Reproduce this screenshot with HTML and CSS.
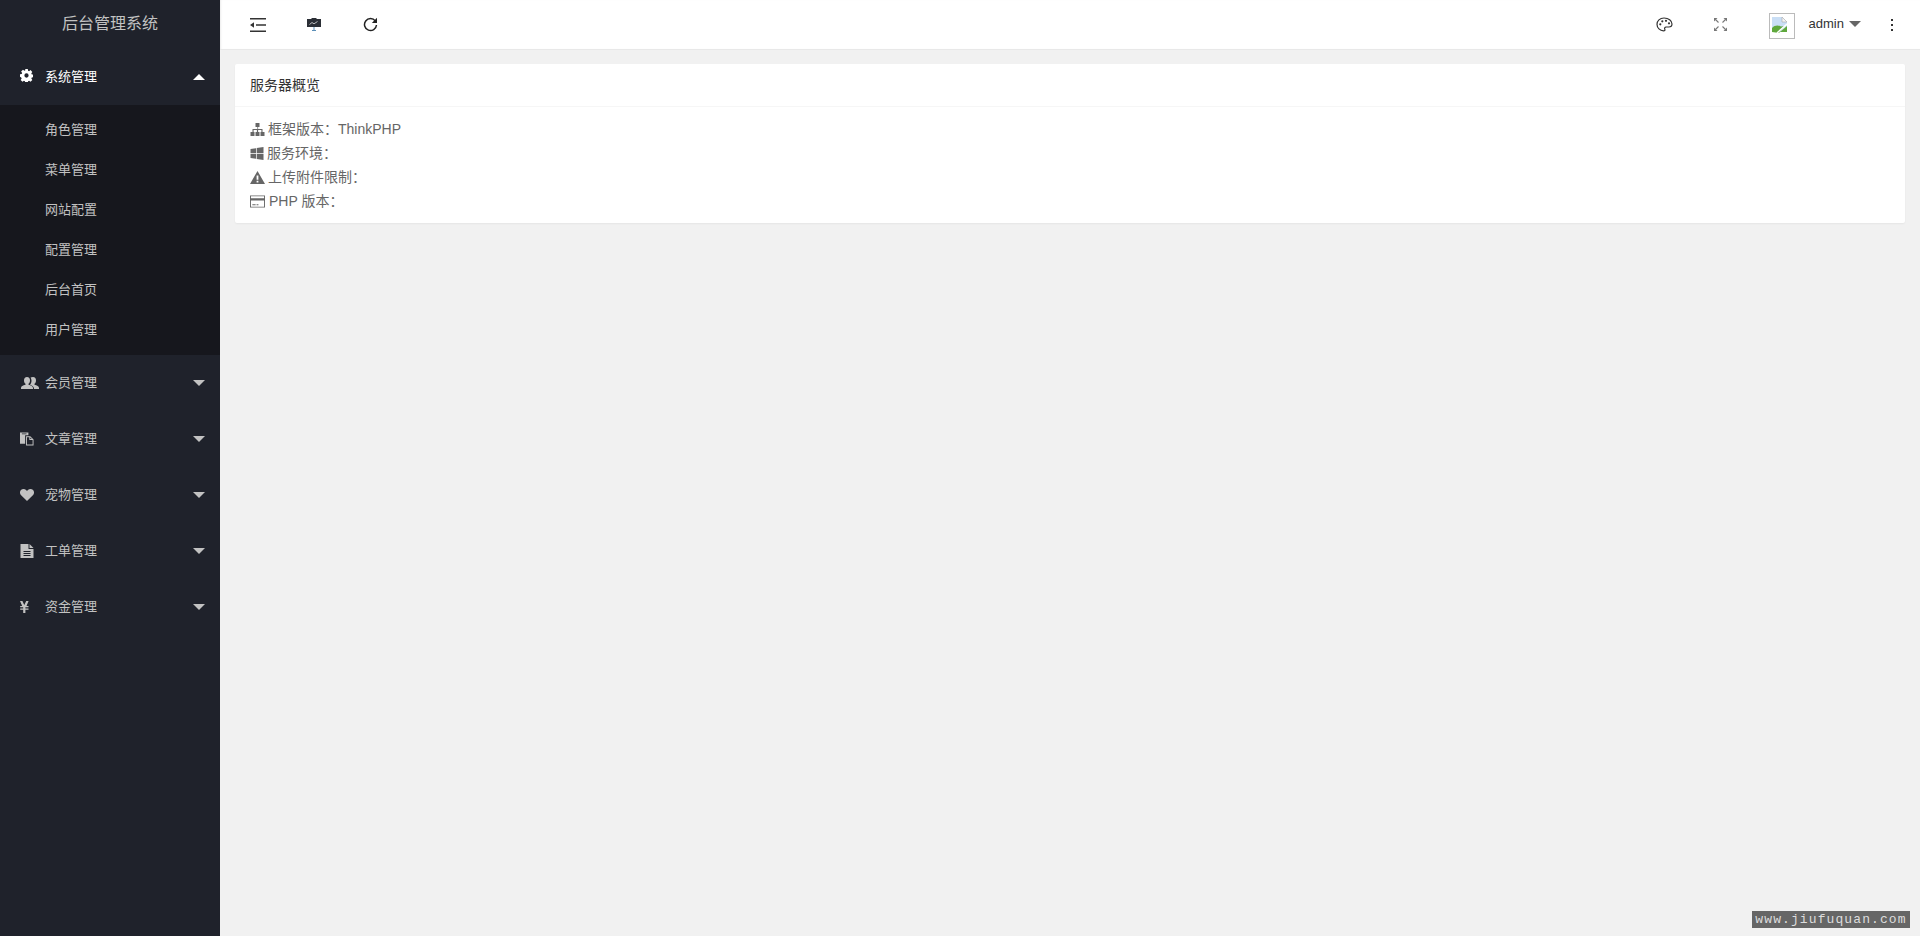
FILE: index.html
```html
<!DOCTYPE html>
<html lang="zh-CN">
<head>
    <meta charset="UTF-8">
    <title>后台管理系统</title>
    <link rel="stylesheet" href="styles.css">
</head>
<body>
    <div class="layout">
        <aside class="side">
            <div class="logo">后台管理系统</div>
            <ul class="nav">
                <li class="nav-item open">
                    <a class="nav-link">
                        <svg class="nav-icon gear" viewBox="0 0 14 14"><path fill-rule="evenodd" d="M5.6 0h2.8l.3 1.8 1.1.5L11.300 1.200l2 2-1.100 1.500.5 1.100 1.800.3v2.800l-1.800.3-.5 1.100 1.100 1.500-2 2-1.500-1.100-1.100.5-.3 1.800H5.600l-.3-1.800-1.100-.5-1.500 1.100-2-2 1.100-1.500-.5-1.100L0 8.400V5.600l1.800-.3.5-1.100-1.100-1.500 2-2 1.500 1.100 1.100-.5zM7 4.700a2.300 2.300 0 1 0 0 4.600 2.300 2.300 0 0 0 0-4.600z"/></svg>
                        <span>系统管理</span>
                        <i class="caret up"></i>
                    </a>
                    <ul class="sub">
                        <li>角色管理</li>
                        <li>菜单管理</li>
                        <li>网站配置</li>
                        <li>配置管理</li>
                        <li>后台首页</li>
                        <li>用户管理</li>
                    </ul>
                </li>
                <li class="nav-item">
                    <a class="nav-link">
                        <svg class="nav-icon wide" viewBox="0 0 18 14"><path d="M6 1c2 0 3 1.500 3 3.500 0 1.500-.6 2.700-1.500 3.300v1c2.500.7 4.500 1.500 4.500 3.200v1H0v-1c0-1.700 1.900-2.500 4.500-3.200v-1C3.600 7.200 3 6 3 4.500 3 2.500 4 1 6 1z"/><path d="M12 1c2 0 3 1.500 3 3.500 0 1.500-.6 2.700-1.500 3.300v1c2.500.7 4.500 1.500 4.500 3.200v1h-5c0-2.300-1.700-3.400-4-4.200.8-1 1.500-2.300 1.500-4 0-1.300-.3-2.400-.9-3.200C10.200 1.300 11 1 12 1z"/></svg>
                        <span>会员管理</span>
                        <i class="caret"></i>
                    </a>
                </li>
                <li class="nav-item">
                    <a class="nav-link">
                        <svg class="nav-icon" viewBox="0 0 15 14"><path d="M0 0h9v3H5.500v9H0zM2 1v1h5V1z" fill-rule="evenodd"/><path fill-rule="evenodd" d="M6.500 4H11l3.500 3.500V14h-8zM7.500 5v8h6V8H10V5zM11 5.400V7h1.600z"/></svg>
                        <span>文章管理</span>
                        <i class="caret"></i>
                    </a>
                </li>
                <li class="nav-item">
                    <a class="nav-link">
                        <svg class="nav-icon" viewBox="0 0 15 13"><path d="M7.500 13 1.200 6.800C-.4 5.100-.4 2.600 1 1.200 2.500-.3 5-.3 6.500 1.100l1 1 1-1C10-.3 12.500-.3 14 1.200c1.400 1.400 1.400 3.900-.2 5.600z"/></svg>
                        <span>宠物管理</span>
                        <i class="caret"></i>
                    </a>
                </li>
                <li class="nav-item">
                    <a class="nav-link">
                        <svg class="nav-icon" viewBox="0 0 13 14"><path fill-rule="evenodd" d="M0 0h8v5h5v9H0zM9 0l4 4H9zM3 7v1h7V7zM3 9v1h7V9zM3 11v1h7v-1z"/></svg>
                        <span>工单管理</span>
                        <i class="caret"></i>
                    </a>
                </li>
                <li class="nav-item">
                    <a class="nav-link">
                        <svg class="nav-icon" viewBox="0 0 14 14"><path d="M0 1h2.400L4.300 5 6.200 1h2.400L6.500 6h2v1.200H5.400V8.500h3.100v1.200H5.400V13H3.200V9.700H.2V8.500h3V7.200h-3V6h2z"/></svg>
                        <span>资金管理</span>
                        <i class="caret"></i>
                    </a>
                </li>
            </ul>
        </aside>
        <div class="main">
            <header class="top">
                <div class="top-left">
                    <a class="tool">
                        <svg width="16" height="14" viewBox="0 0 16 14"><path d="M0 0h16v1.400H0zM6 6.300h10v1.400H6zM0 12.600h16V14H0zM0 7l4-2.800v5.600z" fill="#333"/></svg>
                    </a>
                    <a class="tool">
                        <svg width="14" height="13" viewBox="0 0 14 13"><path d="M4.500 0h5v1h4.500v8H0V1h4.500z" fill="#2b2f36"/><path d="M2.500 6.500 5 4.500 7 5.800l3.500-2.300" fill="none" stroke="#ddd" stroke-width=".8"/><path d="M6.500 9h1v3h1.500v1h-4v-1h1.500z" fill="#5b8fb8"/></svg>
                    </a>
                    <a class="tool">
                        <svg width="15" height="15" viewBox="0 0 15 15"><path d="M12.300 3.900A6 6 0 1 0 13.500 8" fill="none" stroke="#222" stroke-width="1.500"/><path d="M14 .8V6H8.800z" fill="#222"/></svg>
                    </a>
                </div>
                <div class="top-right">
                    <a class="tool small">
                        <svg width="17" height="15" viewBox="0 0 17 15"><path d="M8 1C3.800 1 1 3.800 1 7.300 1 11 4 13.800 7.500 13.800c1.400 0 1.700-.8 1.300-1.600-.6-1.100 0-2.200 1.300-2.200h2.700C14.800 10 16 8.900 16 7 16 3.500 12.500 1 8 1z" fill="none" stroke="#333" stroke-width="1.200"/><circle cx="4.300" cy="7.300" r="1.100" fill="#333"/><circle cx="6.300" cy="4.300" r="1.100" fill="#333"/><circle cx="10" cy="3.800" r="1.100" fill="#333"/><circle cx="13" cy="6.300" r="1.100" fill="#333"/></svg>
                    </a>
                    <a class="tool small">
                        <svg width="13" height="13" viewBox="0 0 13 13"><path d="M1.500 1.500l3 3M11.500 1.500l-3 3M1.500 11.500l3-3M11.500 11.500l-3-3" stroke="#777" stroke-width="1.100" fill="none"/><path d="M0 0h3.500L0 3.500zM13 0v3.500L9.500 0zM0 13V9.500L3.500 13zM13 13H9.500L13 9.500z" fill="#777"/></svg>
                    </a>
                    <div class="user">
                        <div class="avatar">
                            <svg width="16" height="16" viewBox="0 0 16 16"><path d="M0 0h10l5 5v10H0z" fill="#c9def5"/><path d="M10 0l5 5h-5z" fill="#f4f4f4" stroke="#aaa" stroke-width=".6"/><path d="M0 15V11c3-3 6-3 9-1.500l4-.5-6 7z" fill="#5fa83c"/><path d="M8 15l7-6v6z" fill="#5fa83c"/><path d="M5 16 15 7" stroke="#fff" stroke-width="1.500"/></svg>
                        </div>
                        <span class="user-name">admin</span>
                        <i class="caret dark"></i>
                    </div>
                    <a class="more"><i></i><i></i><i></i></a>
                </div>
            </header>
            <div class="content">
                <section class="card">
                    <div class="card-head">服务器概览</div>
                    <div class="card-body">
                        <p>
                            <svg width="15" height="13" viewBox="0 0 15 13"><path d="M5.500 0h4v4h-1.400v2H12.500v3H14.500v4h-4V9h.9V7H8.100v2h1.400v4h-4V9h1.400V7H3.600v2h.9v4H.5V9h2V6h4.900V4H5.500z"/></svg>
                            框架版本：ThinkPHP
                        </p>
                        <p>
                            <svg width="14" height="13" viewBox="0 0 13 13"><path d="M0 2l5.500-.8V6H0zM6.200 1.100 13 0v6H6.200zM0 6.800h5.500v4.900L0 11zM6.200 6.800H13V13l-6.800-1z"/></svg>
                            服务环境：
                        </p>
                        <p>
                            <svg width="15" height="13" viewBox="0 0 15 13"><path fill-rule="evenodd" d="M7.500 0l7.500 13H0zM6.600 4.500v4.300h1.800V4.500zM6.600 9.800v1.600h1.800V9.800z"/></svg>
                            上传附件限制：
                        </p>
                        <p>
                            <svg class="card-icon" width="15" height="13" viewBox="0 0 16 13"><path fill-rule="evenodd" d="M0 0h16v13H0zM1 1v2h14V1zM1 5.500V12h14V5.500zM2.500 9.500H6v1H2.500zM7 9.500h2v1H7z"/></svg>
                            PHP 版本：
                        </p>
                    </div>
                </section>
            </div>
        </div>
    </div>
    <div class="watermark">www.jiufuquan.com</div>
</body>
</html>
```

FILE: styles.css
```css
* {
    margin: 0;
    padding: 0;
    box-sizing: border-box;
}

body {
    font-family: "Liberation Sans", "Noto Sans CJK SC", sans-serif;
    font-size: 14px;
    color: #666;
    background: #f1f1f1;
    height: 936px;
    overflow: hidden;
    position: relative;
}

ul {
    list-style: none;
}

.layout {
    display: flex;
    height: 100%;
}

/* sidebar */
.side {
    width: 220px;
    flex-shrink: 0;
    background: #1f222b;
}

.logo {
    height: 48px;
    line-height: 48px;
    text-align: center;
    font-size: 16px;
    color: #c2c2c2;
}

.nav-link {
    display: flex;
    align-items: center;
    height: 56px;
    padding: 0 15px 0 20px;
    font-size: 13px;
    color: #c2c2c2;
}

.nav-item {
    fill: #c2c2c2;
}

.nav-item.open .nav-link {
    color: #fff;
    fill: #fff;
    height: 57px;
}

.nav-icon {
    width: 14px;
    height: 14px;
    margin-right: 11px;
    flex-shrink: 0;
}

.nav-icon.gear {
    width: 13px;
    height: 13px;
    margin-right: 12px;
    margin-bottom: 2px;
}

.nav-icon.wide {
    width: 18px;
    margin-right: 6px;
    margin-left: 1px;
}

.nav-link span {
    flex: 1;
    margin-bottom: 3px;
}

.caret {
    width: 0;
    height: 0;
    border-left: 6px solid transparent;
    border-right: 6px solid transparent;
    border-top: 6px solid #c2c2c2;
    margin-bottom: 1px;
}

.caret.up {
    border-top: 0;
    border-bottom: 6px solid #fff;
    margin: 1px 0 0;
}

.caret.dark {
    border-top-color: #666;
    margin: 0 3px 2px 5px;
}

.sub {
    background: #16171d;
    padding: 5px 0;
}

.sub li {
    height: 40px;
    line-height: 40px;
    padding-left: 45px;
    font-size: 13px;
    color: #c2c2c2;
}

/* top bar */
.main {
    flex: 1;
    min-width: 0;
}

.top {
    height: 50px;
    background: #fff;
    border-bottom: 1px solid #e8e8e8;
    box-shadow: inset 2px 0 2px -1px rgba(0, 0, 0, 0.08);
    display: flex;
    justify-content: space-between;
    align-items: center;
}

.top-left {
    display: flex;
    padding-left: 10px;
}

.tool {
    width: 56px;
    height: 49px;
    display: flex;
    align-items: center;
    justify-content: center;
}

.top-right {
    display: flex;
    align-items: center;
}

.user {
    display: flex;
    align-items: center;
    color: #333;
    font-size: 13px;
    margin-left: 20px;
    height: 49px;
}

.avatar {
    width: 26px;
    height: 26px;
    border: 1px solid #bbb;
    margin: 3px 14px 0 0;
    padding: 3px 0 0 2px;
}

.avatar svg {
    display: block;
}

.user-name {
    margin-bottom: 2px;
}

.more {
    display: flex;
    flex-direction: column;
    align-items: center;
    gap: 3px;
    width: 56px;
}

.more i {
    width: 2px;
    height: 2px;
    background: #333;
}

/* content */
.content {
    padding: 14px 15px;
}

.card {
    background: #fff;
    border-radius: 2px;
    box-shadow: 0 1px 2px rgba(0, 0, 0, 0.05);
}

.card-head {
    height: 43px;
    line-height: 42px;
    padding: 0 15px;
    color: #333;
    border-bottom: 1px solid #f6f6f6;
}

.card-body {
    padding: 10px 15px;
    line-height: 24px;
}

.card-body p {
    display: flex;
    align-items: center;
    gap: 3px;
    height: 24px;
    fill: #666;
}

.card-icon {
    margin-right: 1px;
}

.watermark {
    position: absolute;
    left: 1752px;
    top: 911px;
    width: 158px;
    height: 17px;
    line-height: 17px;
    text-align: center;
    background: #666;
    color: #ddd;
    font-family: "Liberation Mono", monospace;
    font-size: 13px;
    letter-spacing: 1.1px;
}
```
